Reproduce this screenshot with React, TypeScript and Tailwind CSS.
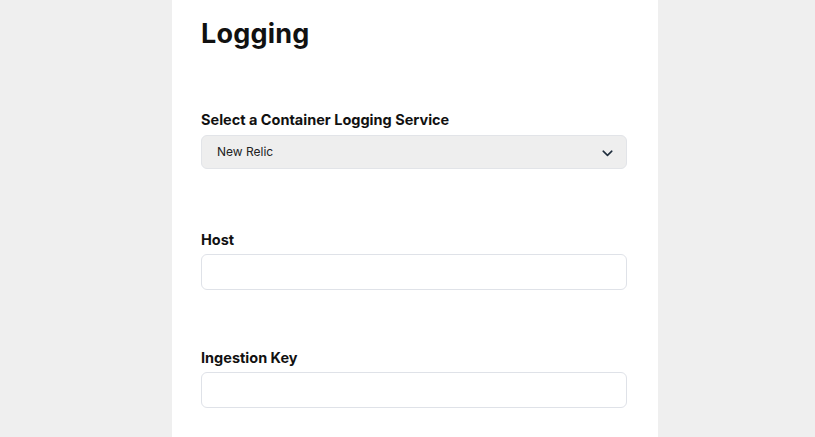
import React from "react";

export default function App() {
  return (
    <div className="w-[815px] h-[437px] bg-[#efefef] flex overflow-hidden" style={{ fontFamily: "Inter, 'Noto Sans', sans-serif" }}>
      <div className="ml-[172px] w-[486px] h-full bg-white pl-[29px] pr-[31px] flex flex-col">
        <h1 className="mt-[17px] text-[27px] leading-[34px] font-bold text-[#111] tracking-[0.2px]">Logging</h1>
        <label className="mt-[59px] text-[14.5px] leading-5 font-bold text-[#111]">Select a Container Logging Service</label>
        <div className="mt-[5px] h-[34px] rounded-[6px] border border-[#e2e4e8] bg-[#eeeeee] flex items-center justify-between pl-[15px] pr-[13px]">
          <span className="text-[12px] text-[#222]">New Relic</span>
          <svg width="11" height="7" viewBox="0 0 11 7" fill="none" className="mt-[3px]">
            <path d="M1.2 1.2 L5.5 5.3 L9.8 1.2" stroke="#1f2d3d" strokeWidth="1.6" strokeLinecap="round" strokeLinejoin="round" />
          </svg>
        </div>
        <label className="mt-[61px] text-[14.5px] leading-5 font-bold text-[#111]">Host</label>
        <div className="mt-1 h-[36px] rounded-[6px] border border-[#dfe2e8] bg-white" />
        <label className="mt-[58px] text-[14.5px] leading-5 font-bold text-[#111]">Ingestion Key</label>
        <div className="mt-1 h-[36px] rounded-[6px] border border-[#dfe2e8] bg-white" />
      </div>
    </div>
  );
}
